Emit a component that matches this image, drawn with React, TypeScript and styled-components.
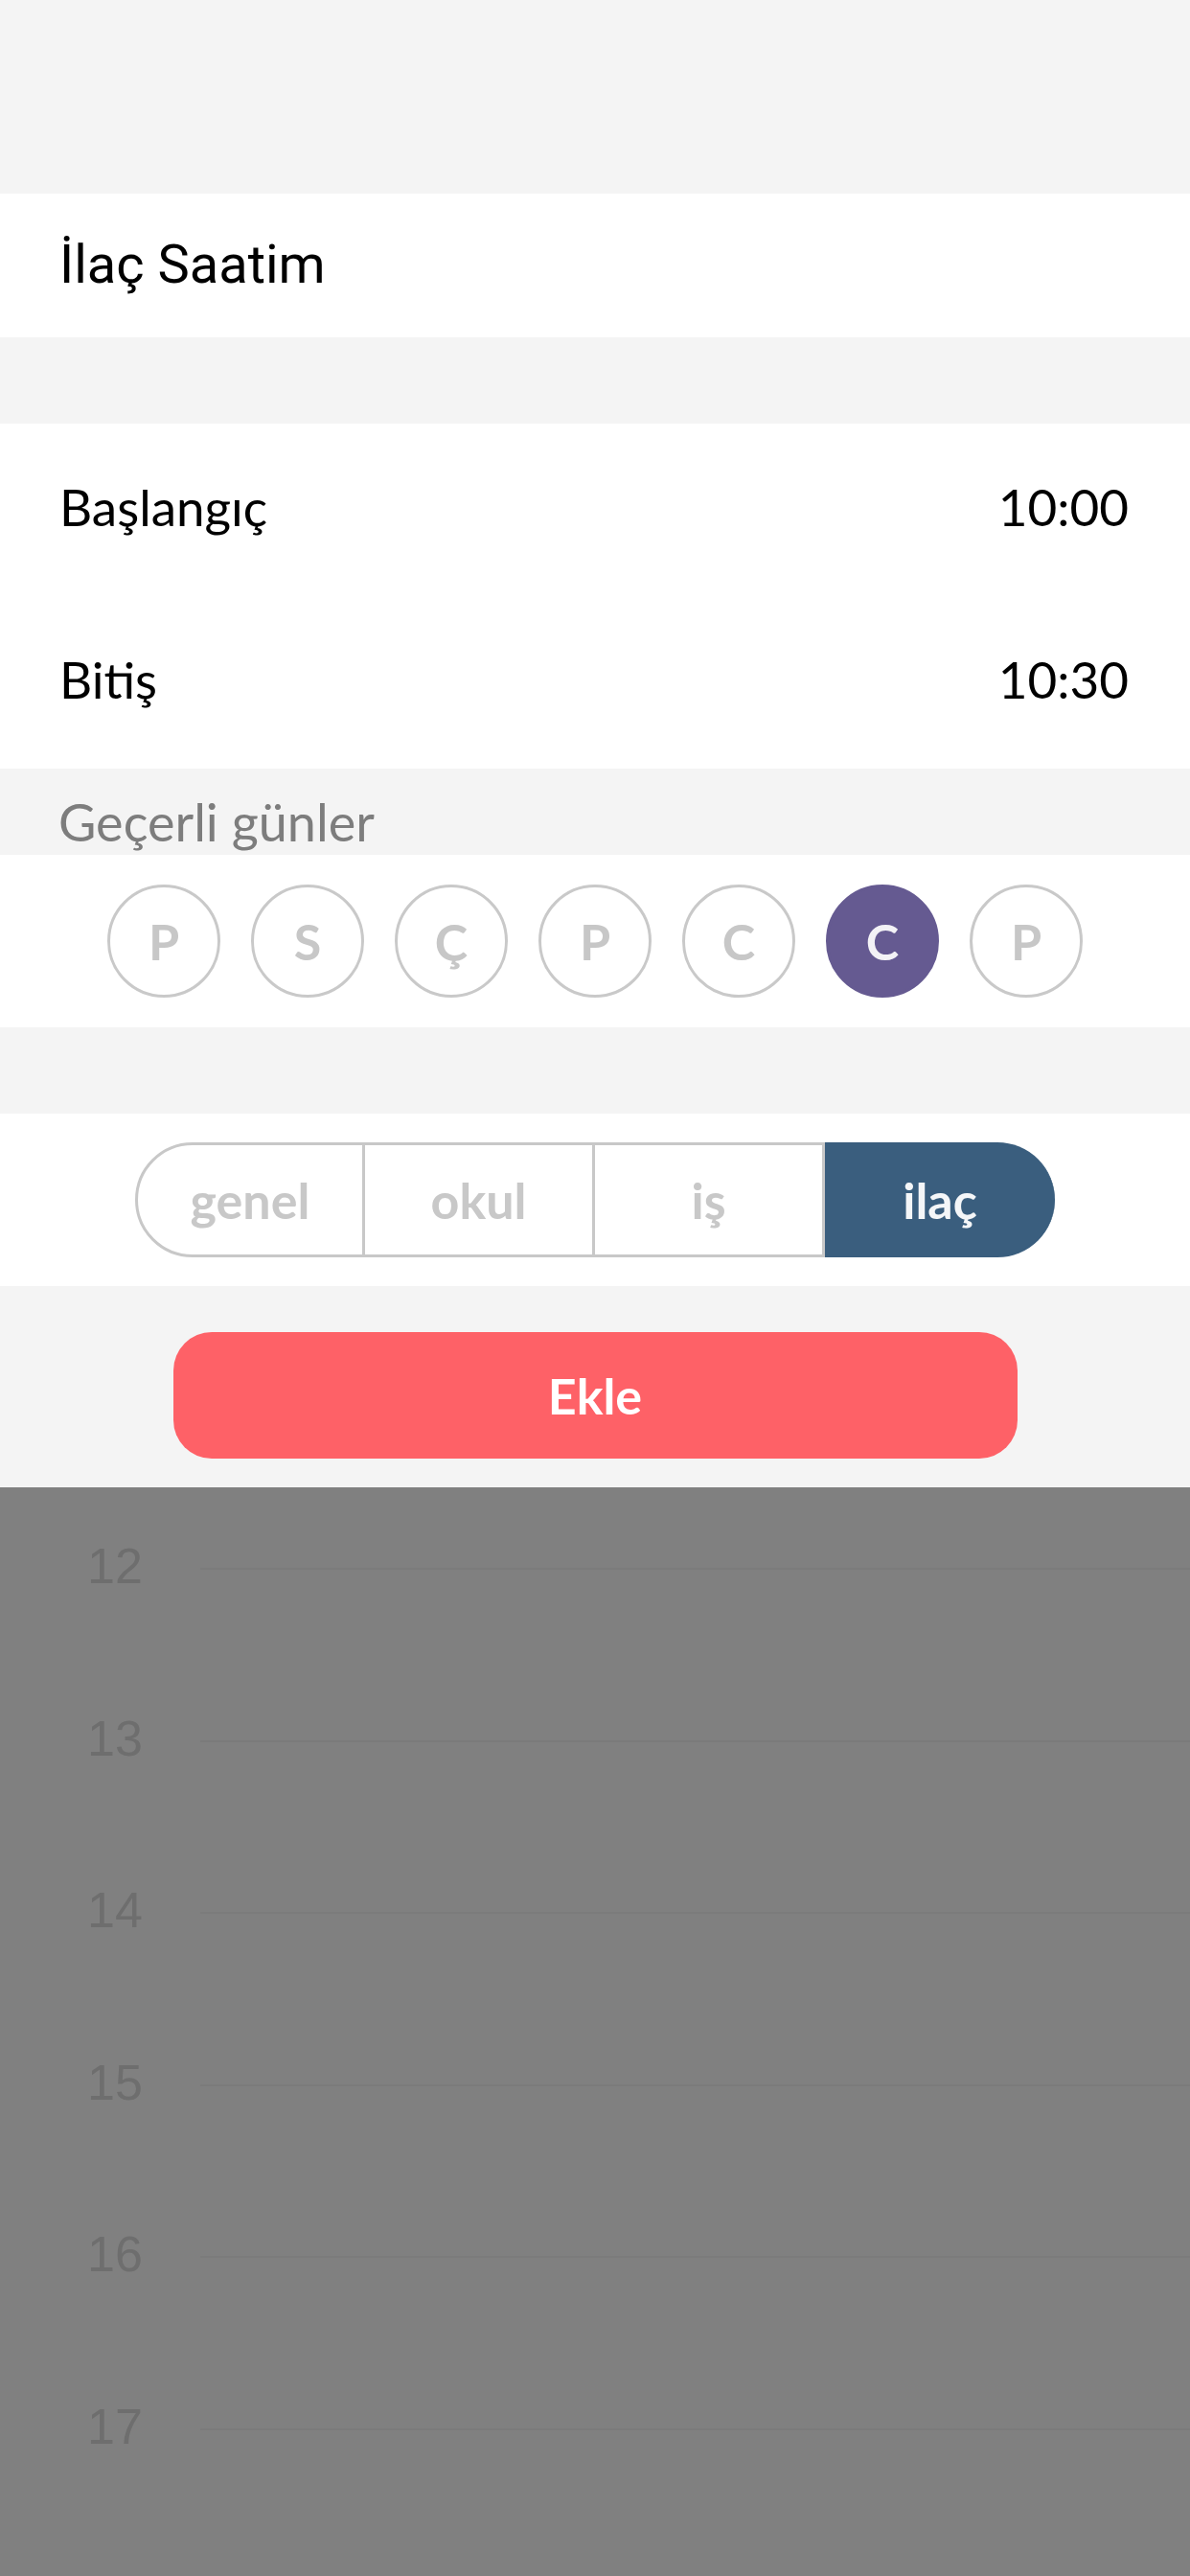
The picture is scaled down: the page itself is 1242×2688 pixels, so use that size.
import React from "react";
import styled, { createGlobalStyle } from "styled-components";

const GlobalStyle = createGlobalStyle`
  html, body {
    margin: 0;
    padding: 0;
    background: #808080;
  }
  body {
    width: 1242px;
  }
  * {
    box-sizing: border-box;
  }
`;

const Screen = styled.div`
  width: 1242px;
  height: 2688px;
  display: flex;
  flex-direction: column;
  overflow: hidden;
  background: #f4f4f4;
  font-family: Lato, "Noto Sans", sans-serif;
`;

const Sheet = styled.div`
  display: flex;
  flex-direction: column;
  background: #f4f4f4;
  padding-top: 202px;
`;

const TitleBar = styled.div`
  height: 150px;
  background: #ffffff;
  display: flex;
  align-items: center;
  padding: 0 0 2px 62px;
  font-family: Roboto, "Noto Sans", sans-serif;
  font-size: 56px;
  color: #000000;
`;

const WhiteGroup = styled.div<{ $gap?: number }>`
  background: #ffffff;
  margin-top: ${(p) => p.$gap ?? 0}px;
  display: flex;
  flex-direction: column;
`;

const TimeRow = styled.div`
  height: 180px;
  display: flex;
  align-items: center;
  justify-content: space-between;
  padding: 0 64px 7px 62px;
  font-size: 53px;
  line-height: 1.2;
  color: #000000;
`;

const SectionLabel = styled.div`
  height: 90px;
  padding: 24px 0 0 61px;
  font-size: 54px;
  line-height: 1.2;
  color: #7d7d7d;
`;

const DaysRow = styled.div`
  height: 180px;
  background: #ffffff;
  display: flex;
  align-items: center;
  justify-content: center;
  gap: 32px;
`;

const DayCircle = styled.div<{ $selected?: boolean }>`
  width: 118px;
  height: 118px;
  border-radius: 50%;
  border: 3px solid ${(p) => (p.$selected ? "#655a91" : "#c9c9c9")};
  background: ${(p) => (p.$selected ? "#655a91" : "#ffffff")};
  color: ${(p) => (p.$selected ? "#f3f2f6" : "#c7c7c7")};
  display: flex;
  align-items: center;
  justify-content: center;
  font-size: 52px;
  font-weight: 700;
  line-height: 1.2;
`;

const CategoryBand = styled.div`
  margin-top: 90px;
  height: 180px;
  background: #ffffff;
  display: flex;
  align-items: center;
  justify-content: center;
`;

const Segmented = styled.div`
  width: 960px;
  height: 120px;
  display: flex;
`;

const Segment = styled.div<{ $active?: boolean; $first?: boolean; $last?: boolean }>`
  width: 240px;
  height: 120px;
  display: flex;
  align-items: center;
  justify-content: center;
  font-size: 52px;
  font-weight: 700;
  line-height: 1.2;
  border-style: solid;
  border-color: ${(p) => (p.$active ? "#3a5e7e" : "#c8c8c8")};
  border-width: 3px ${(p) => (p.$last ? 0 : 3)}px 3px ${(p) => (p.$first ? 3 : 0)}px;
  border-radius: ${(p) => (p.$first ? "60px 0 0 60px" : p.$last ? "0 60px 60px 0" : "0")};
  background: ${(p) => (p.$active ? "#3a5e7e" : "#ffffff")};
  color: ${(p) => (p.$active ? "#f4f6f8" : "#c8c8c8")};
`;

const ButtonBand = styled.div`
  height: 210px;
  padding-top: 48px;
  display: flex;
  justify-content: center;
  background: #f4f4f4;
`;

const AddButton = styled.button`
  width: 881px;
  height: 132px;
  border: none;
  border-radius: 40px;
  background: #fe6167;
  color: #ffffff;
  font-family: Lato, "Noto Sans", sans-serif;
  font-size: 52px;
  font-weight: 700;
  line-height: 1.2;
  padding: 0;
`;

const Backdrop = styled.div`
  flex: 1;
  background: #808080;
  padding-top: 56px;
  display: flex;
  flex-direction: column;
`;

const HourRow = styled.div`
  height: 179.6px;
  flex-shrink: 0;
  display: flex;
  align-items: flex-start;
  padding-left: 91px;
`;

const HourLabel = styled.div`
  width: 118px;
  font-family: "Liberation Sans", Arial, sans-serif;
  font-size: 52px;
  line-height: 52px;
  color: #6e6e6e;
`;

const HourLine = styled.div`
  flex: 1;
  height: 2px;
  margin-top: 28px;
  background: #7b7b7b;
`;

const days = ["P", "S", "Ç", "P", "C", "C", "P"];
const categories = ["genel", "okul", "iş", "ilaç"];
const hours = [12, 13, 14, 15, 16, 17];

export default function App() {
  const selectedDay = 5;
  const selectedCategory = 3;
  return (
    <>
      <GlobalStyle />
      <Screen>
        <Sheet>
          <TitleBar>İlaç Saatim</TitleBar>
          <WhiteGroup $gap={90}>
            <TimeRow>
              <span>Başlangıç</span>
              <span>10:00</span>
            </TimeRow>
            <TimeRow>
              <span>Bitiş</span>
              <span>10:30</span>
            </TimeRow>
          </WhiteGroup>
          <SectionLabel>Geçerli günler</SectionLabel>
          <DaysRow>
            {days.map((d, i) => (
              <DayCircle key={i} $selected={i === selectedDay}>
                {d}
              </DayCircle>
            ))}
          </DaysRow>
          <CategoryBand>
            <Segmented>
              {categories.map((c, i) => (
                <Segment
                  key={c}
                  $active={i === selectedCategory}
                  $first={i === 0}
                  $last={i === categories.length - 1}
                >
                  {c}
                </Segment>
              ))}
            </Segmented>
          </CategoryBand>
          <ButtonBand>
            <AddButton>Ekle</AddButton>
          </ButtonBand>
        </Sheet>
        <Backdrop>
          {hours.map((h) => (
            <HourRow key={h}>
              <HourLabel>{h}</HourLabel>
              <HourLine />
            </HourRow>
          ))}
        </Backdrop>
      </Screen>
    </>
  );
}
